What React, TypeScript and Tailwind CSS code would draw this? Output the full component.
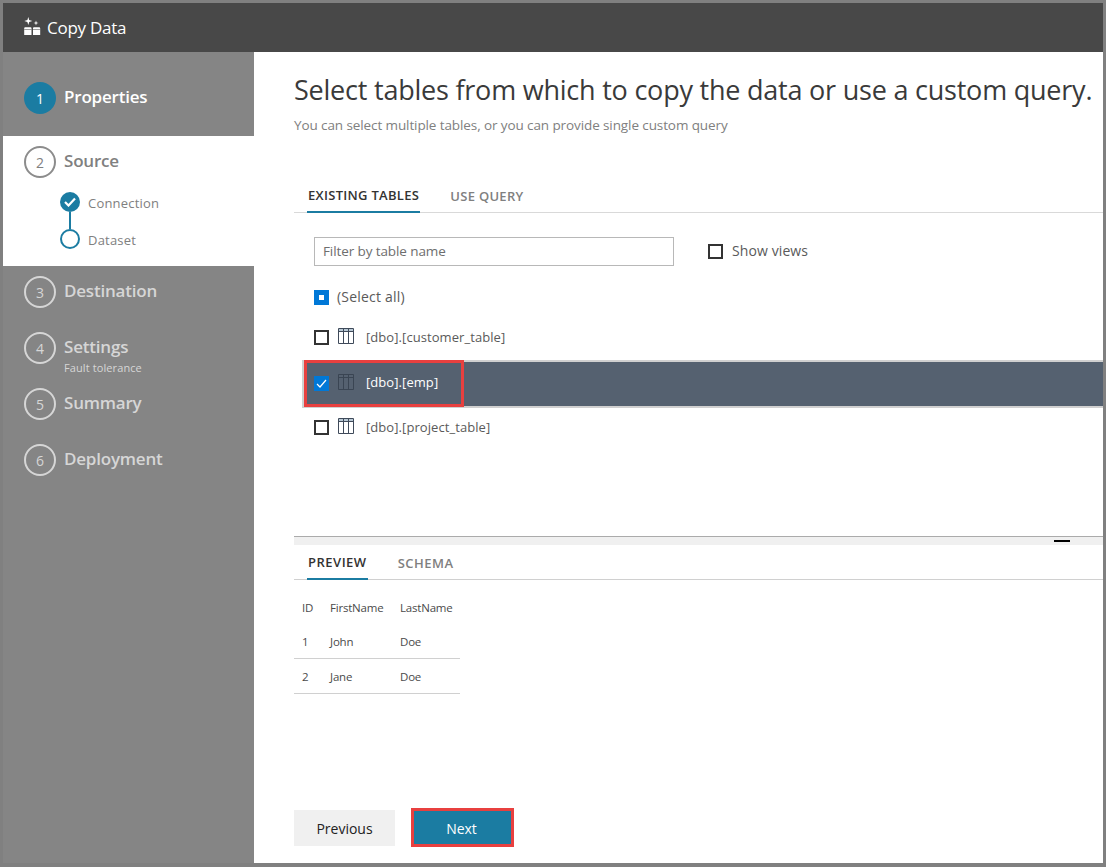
import React from "react";

const font = { fontFamily: '"Open Sans", "Noto Sans", sans-serif' };

function Step({ n, label, sub }: { n: number; label: string; sub?: string }) {
  return (
    <div className="flex h-14 items-center pl-[21px] relative">
      <div className="flex h-8 w-8 shrink-0 items-center justify-center rounded-full border-2 border-[#d6d6d6] text-[14px] text-[#d6d6d6]">
        {n}
      </div>
      <div className="ml-2 font-semibold text-[17px] leading-6 tracking-[-0.2px] text-[#d6d6d6] -mt-[2px]">{label}</div>
      {sub && (
        <div className="absolute left-[61px] top-[40px] text-[11px] leading-4 tracking-[0.1px] text-[#d6d6d6]">{sub}</div>
      )}
    </div>
  );
}

function TableIcon({ color, band }: { color: string; band: string }) {
  return (
    <svg width="16" height="16" viewBox="0 0 16 16" fill="none" stroke={color} strokeWidth="1">
      <rect x="1" y="1" width="14" height="3" fill={band} stroke="none" />
      <path d="M0.5 0.5H15.5V15.5H0.5Z" />
      <path d="M0.5 3.5H15.500M5.500 0.5V15.500M10.500 0.5V15.500" />
    </svg>
  );
}

function Box() {
  return <div className="h-[15px] w-[15px] border-2 border-[#333333] bg-white" />;
}

function Row({ label, h }: { label: string; h: string }) {
  return (
    <div className={`flex ${h} items-center pl-[20px] text-[13px] tracking-[0.07px] text-[#5a5a5a]`}>
      <Box />
      <div className="ml-[9px] -mt-[3px]"><TableIcon color="#3f4a5a" band="#b8c8d4" /></div>
      <div className="ml-[12px] mt-[1px]">{label}</div>
    </div>
  );
}

export default function App() {
  return (
    <div className="flex h-[867px] w-[1106px] flex-col overflow-hidden border-t-[3px] border-r-[3px] border-b-[4px] border-l-[3px] border-[#808080] bg-white" style={font}>
      <div className="flex h-[49px] shrink-0 items-center bg-[#484848] pl-[21px] text-white">
        <svg width="17" height="19" viewBox="0 0 17 19" fill="white" className="-mt-[3px]">
          <path d="M4.300 0l.9 3.100 3.100.9-3.100.9-.9 3.100-.9-3.100L.3 4l3.100-.9Z" />
          <path d="M12 3.500l.6 1.900 1.900.6-1.900.6-.6 1.900-.6-1.900-1.900-.6 1.900-.6Z" />
          <path d="M0.200 11.200a1 1 0 0 1 1-1h5.300a1 1 0 0 1 1 1V18H.2ZM9 11.200a1 1 0 0 1 1-1h5.200a1 1 0 0 1 1 1V18H9Z" />
          <path d="M0.200 12.300h7.300v.7H.2ZM9 12.300h7.200v.7H9Z" fill="#484848" opacity="0.7" />
        </svg>
        <span className="ml-[6px] text-[17px] tracking-[-0.25px]">Copy Data</span>
      </div>
      <div className="flex min-h-0 flex-1">
        <div className="flex w-[251px] shrink-0 flex-col bg-[#858585]">
          <div className="flex h-[84px] items-center pl-[21px] pt-[8px]">
            <div className="flex h-8 w-8 items-center justify-center rounded-full bg-[#1b7ca2] text-[14px] text-white">1</div>
            <div className="ml-2 -mt-[2px] text-[17px] font-semibold tracking-[-0.2px] text-white">Properties</div>
          </div>
          <div className="h-[130px] bg-white pl-[21px] pt-[10px]">
            <div className="flex items-center">
              <div className="flex h-8 w-8 items-center justify-center rounded-full border-2 border-[#8c8c8c] text-[14px] text-[#808080]">2</div>
              <div className="ml-2 -mt-[2px] text-[17px] font-semibold tracking-[-0.2px] text-[#808080]">Source</div>
            </div>
            <div className="ml-[36px] mt-[14px] flex">
              <div className="flex w-[20px] flex-col items-center">
                <div className="flex h-5 w-5 items-center justify-center rounded-full bg-[#1b7ca2]">
                  <svg width="12" height="10" viewBox="0 0 12 10" fill="none" stroke="white" strokeWidth="2.200">
                    <path d="M1 5l3.500 3.500L11 1.500" />
                  </svg>
                </div>
                <div className="h-[17px] w-[2px] bg-[#1b7ca2]" />
                <div className="h-5 w-5 rounded-full border-2 border-[#1b7ca2]" />
              </div>
              <div className="ml-[8px] flex flex-col pt-[2px] text-[13px] tracking-[0.2px] text-[#808080]">
                <div className="flex h-5 items-center">Connection</div>
                <div className="mt-[17px] flex h-5 items-center">Dataset</div>
              </div>
            </div>
          </div>
          <div className="-mt-[2px]">
            <Step n={3} label="Destination" />
            <Step n={4} label="Settings" sub="Fault tolerance" />
            <Step n={5} label="Summary" />
            <Step n={6} label="Deployment" />
          </div>
        </div>
        <div className="flex min-w-0 flex-1 flex-col overflow-hidden pl-[40px]">
          <h1 className="mt-[18px] whitespace-nowrap text-[27px] leading-[40px] tracking-[-0.22px] text-[#3a3a3a]">
            Select tables from which to copy the data or use a custom query.
          </h1>
          <p className="mt-[5px] text-[13.500px] leading-5 tracking-[-0.1px] text-[#808080]">
            You can select multiple tables, or you can provide single custom query
          </p>
          <div className="mt-[43px] flex h-[35px] items-stretch border-b border-[#d9d9d9] pl-[13px] text-[13px] font-semibold tracking-[0.3px]">
            <div className="flex h-[35px] items-center border-b-2 border-[#1b7ca2] px-[1px] pt-[3px] text-[#333333]">EXISTING TABLES</div>
            <div className="ml-[30px] flex items-center pt-[3px] text-[#808080]">USE QUERY</div>
          </div>
          <div className="mt-[24px] flex items-center pl-[20px]">
            <div className="flex h-[29px] w-[360px] items-center border border-[#b8b8b8] pl-[8px] text-[13.500px] tracking-[-0.1px] text-[#6e6e6e]">
              Filter by table name
            </div>
            <div className="ml-[34px]"><Box /></div>
            <div className="ml-[9px] -mt-[2px] text-[14px] tracking-[0.1px] text-[#5a5a5a]">Show views</div>
          </div>
          <div className="mt-[14px] flex h-[34px] items-center pl-[20px] text-[14px] tracking-[0.2px] text-[#5a5a5a]">
            <div className="flex h-[15px] w-[15px] items-center justify-center bg-[#0078d7]">
              <div className="h-[5px] w-[5px] bg-white" />
            </div>
            <div className="ml-[8px] -mt-[2px]">(Select all)</div>
          </div>
          <Row h="h-[46px]" label="[dbo].[customer_table]" />
          <div className="relative ml-[8px] flex h-[48px] items-center border-y-2 border-l-2 border-[#d0d0d0] bg-[#556170] pl-[10px] text-[13px] tracking-[0.07px] text-white">
            <div className="-mt-[1px] flex h-[15px] w-[15px] items-center justify-center bg-[#0078d7]">
              <svg width="11" height="9" viewBox="0 0 11 9" fill="none" stroke="white" strokeWidth="1.200"><path d="M1 5l3 3 6-7" /></svg>
            </div>
            <div className="ml-[9px] -mt-[5px]"><TableIcon color="#3a4553" band="#556170" /></div>
            <div className="ml-[12px] -mt-[3px]">[dbo].[emp]</div>
            <div className="absolute left-0 top-[-2px] h-[47px] w-[160px] border-[3px] border-[#e8403f]" />
          </div>
          <Row h="h-[39px]" label="[dbo].[project_table]" />
          <div className="relative mt-[89px] flex h-[9px] border-t border-[#ababab] bg-[#f0f0f0]">
            <div className="absolute left-[760px] top-[3px] h-[2px] w-[16px] bg-black" />
          </div>
          <div className="flex h-[35px] items-stretch border-b border-[#d0d0d0] pl-[13px] text-[13px] font-semibold tracking-[0.5px]">
            <div className="flex h-[35px] items-center border-b-2 border-[#1b7ca2] px-[1px] pt-[3px] text-[#333333]">PREVIEW</div>
            <div className="ml-[30px] flex items-center pt-[3px] text-[#808080]">SCHEMA</div>
          </div>
          <table className="mt-[10px] w-[166px] table-fixed text-[11.500px] tracking-[-0.2px] text-[#4a4a4a]">
            <tbody>
              <tr className="h-[35px]">
                <td className="w-[27px] pl-[8px]">ID</td>
                <td className="w-[70px] pl-[9px]">FirstName</td>
                <td className="pl-[9px]">LastName</td>
              </tr>
              <tr className="h-[33px] border-b border-[#d0d0d0]">
                <td className="pl-[8px] pt-[1px]">1</td>
                <td className="pl-[9px] pt-[1px]">John</td>
                <td className="pl-[9px] pt-[1px]">Doe</td>
              </tr>
              <tr className="h-[35px] border-b border-[#d0d0d0]">
                <td className="pl-[8px] pt-[2px]">2</td>
                <td className="pl-[9px] pt-[2px]">Jane</td>
                <td className="pl-[9px] pt-[2px]">Doe</td>
              </tr>
            </tbody>
          </table>
          <div className="mt-auto mb-[16px] flex items-center">
            <button className="h-9 w-[101px] bg-[#f0f0f0] pt-[1px] text-[14px] text-[#222222]">Previous</button>
            <button className="ml-4 h-[39px] w-[103px] border-[3px] border-[#e8403f] bg-[#1b7ca2] pr-[2px] pt-[1px] text-[14px] text-white">Next</button>
          </div>
        </div>
      </div>
    </div>
  );
}
